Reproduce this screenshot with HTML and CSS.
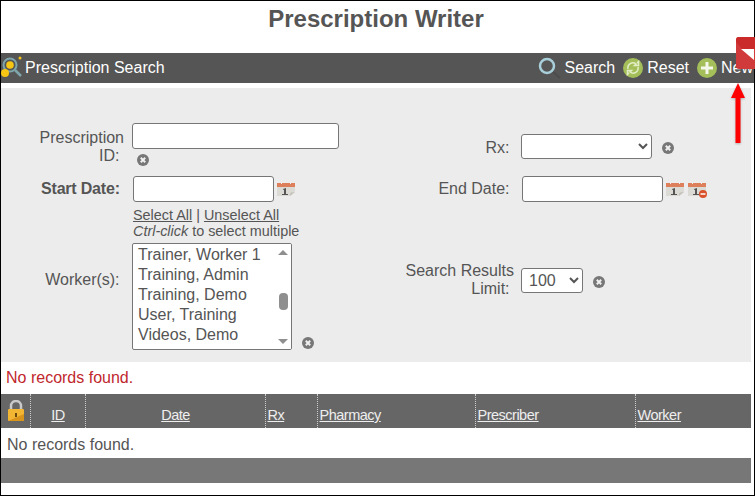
FILE: index.html
```html
<!DOCTYPE html>
<html lang="en">
<head>
  <meta charset="UTF-8" />
  <title>Prescription Writer</title>
  <link rel="stylesheet" href="styles.css">
</head>
<body>
  <svg class="icon-defs" width="0" height="0">
    <defs>
      <g id="clear">
        <circle cx="6" cy="6" r="6" fill="#777"/>
        <path d="M3.800 3.800l4.400 4.400M8.200 3.800l-4.400 4.400" stroke="#f0f0f0" stroke-width="2"/>
      </g>
      <g id="cal">
        <path d="M0 1h18v4H0z" fill="#de7f5c"/>
        <path d="M0 5h18v5l-5 4H0z" fill="#dcdad4"/>
        <path d="M13 14l5-4-4 .5-1 1z" fill="#c4c2bb"/>
        <path d="M4 0h1v2H4zM13 0h1v2h-1z" fill="#eee"/>
        <path d="M6 7l3-1v6h2v1H5v-1h2V7.500L6 8z" fill="#555"/>
      </g>
    </defs>
  </svg>

  <div class="page">
    <h1 class="title">Prescription Writer</h1>

    <div class="toolbar">
      <div class="toolbar-name">
        <svg width="24" height="24" viewBox="0 0 24 24">
          <circle cx="9" cy="9" r="6.500" fill="none" stroke="#7fa6ac" stroke-width="2"/>
          <circle cx="9" cy="9" r="3.800" fill="#f7c513"/>
          <path d="M14 14l6 6" stroke="#7fa6ac" stroke-width="2.500"/>
          <circle cx="4" cy="17" r="4" fill="#f7c513"/>
          <circle cx="19" cy="2" r="1.500" fill="#f7c513"/>
        </svg>
        <span>Prescription Search</span>
      </div>
      <div class="toolbar-actions">
        <a class="action action-search">
          <svg width="26" height="26" viewBox="0 0 26 26">
            <path d="M17 16l8 7" stroke="#4c4c4c" stroke-width="2"/>
            <circle cx="12" cy="11" r="7" fill="none" stroke="#a9d0da" stroke-width="2.500"/>
          </svg>
          Search
        </a>
        <a class="action">
          <svg width="20" height="20" viewBox="0 0 20 20">
            <circle cx="10" cy="10" r="10" fill="#a4bf5a"/>
            <path d="M5 11a5 5 0 0 1 8-5l-1.500 1.500h4v-4L14 5M15 9a5 5 0 0 1-8 5l1.500-1.500h-4v4L6 15" fill="none" stroke="#e4eec6" stroke-width="1.500"/>
          </svg>
          Reset
        </a>
        <a class="action">
          <svg width="20" height="20" viewBox="0 0 20 20">
            <circle cx="10" cy="10" r="10" fill="#a4bf5a"/>
            <path d="M10 4v12M4 10h12" stroke="#f4f7ea" stroke-width="3"/>
          </svg>
          New
        </a>
      </div>
    </div>

    <form class="search-panel">
      <label class="field-label label-id">Prescription ID:&nbsp;</label>
      <div class="field-id">
        <input class="text-input text-wide" type="text">
        <svg class="clear clear-below" width="12" height="12"><use href="#clear"/></svg>
      </div>
      <label class="field-label label-rx">Rx:&nbsp;</label>
      <div class="field-inline field-rx">
        <select class="select-rx"><option></option></select>
        <svg class="clear" width="12" height="12"><use href="#clear"/></svg>
      </div>

      <label class="field-label label-bold">Start Date:&nbsp;</label>
      <div class="field-inline">
        <input class="text-input input-start" type="text">
        <svg class="cal" width="18" height="14"><use href="#cal"/></svg>
      </div>
      <label class="field-label">End Date:&nbsp;</label>
      <div class="field-inline">
        <input class="text-input" type="text">
        <svg class="cal" width="18" height="14"><use href="#cal"/></svg>
        <svg class="cal cal-clear" width="20" height="16" viewBox="0 0 20 16">
          <use href="#cal"/>
          <circle cx="15" cy="12" r="4" fill="#d9502a"/>
          <path d="M12.500 12h5" stroke="#fff" stroke-width="1.500"/>
        </svg>
      </div>

      <label class="field-label label-workers">Worker(s):&nbsp;</label>
      <div class="field-workers">
        <div class="select-links"><a>Select All</a> | <a>Unselect All</a></div>
        <div class="select-hint"><em>Ctrl-click</em> to select multiple</div>
        <div class="listbox-row">
          <div class="listbox">
            <ul class="listbox-items">
              <li>Trainer, Worker 1</li>
              <li>Training, Admin</li>
              <li>Training, Demo</li>
              <li>User, Training</li>
              <li>Videos, Demo</li>
            </ul>
            <div class="listbox-scroll">
              <span class="arrow-up"></span>
              <span class="thumb"></span>
              <span class="arrow-down"></span>
            </div>
          </div>
          <svg class="clear" width="12" height="12"><use href="#clear"/></svg>
        </div>
      </div>
      <label class="field-label label-workers">Search Results Limit:&nbsp;</label>
      <div class="field-inline field-limit">
        <select class="select-limit"><option>100</option></select>
        <svg class="clear" width="12" height="12"><use href="#clear"/></svg>
      </div>
    </form>

    <p class="no-records">No records found.</p>

    <table class="results">
      <thead>
        <tr>
          <th class="col-lock">
            <svg width="18" height="22" viewBox="0 0 18 22">
              <path d="M4 10V6a5 5 0 0 1 10 0v4" fill="none" stroke="#c9c9c9" stroke-width="2.500"/>
              <rect x="1" y="9" width="16" height="12" rx="1" fill="#f2b632"/>
              <path d="M1 21l16-7v6a1 1 0 0 1-1 1z" fill="#d9941c"/>
              <rect x="8" y="13" width="2" height="4" fill="#6b4a10"/>
            </svg>
          </th>
          <th class="col-id center"><a>ID</a></th>
          <th class="col-date center"><a>Date</a></th>
          <th class="col-rx"><a>Rx</a></th>
          <th class="col-pharmacy"><a>Pharmacy</a></th>
          <th class="col-prescriber"><a>Prescriber</a></th>
          <th><a>Worker</a></th>
        </tr>
      </thead>
      <tbody>
        <tr><td colspan="7">No records found.</td></tr>
      </tbody>
      <tfoot>
        <tr><td colspan="7"></td></tr>
      </tfoot>
    </table>
  </div>

  <svg class="corner-flag" width="19" height="32" viewBox="0 0 19 32">
    <path d="M3 0h16v32H3a3 3 0 0 1-3-3V3a3 3 0 0 1 3-3z" fill="#d13a3a"/>
    <path d="M3 0h16v12H6L0 5V3a3 3 0 0 1 3-3z" fill="#ca2a2a"/>
    <path d="M5 12h13v11z" fill="#fff"/>
  </svg>
  <svg class="red-arrow" width="16" height="62" viewBox="0 0 16 62">
    <path d="M8 0l7 15h-4.500v45h-5V15H1z" fill="#f00"/>
  </svg>
</body>
</html>
```

FILE: styles.css
```css
* {
  box-sizing: border-box;
}
html,
body {
  height: 100%;
}
body {
  margin: 0;
  font-family: "Liberation Sans", Arial, sans-serif;
  font-size: 16px;
  color: #555;
  background: #fff;
  overflow: hidden;
}
.icon-defs {
  position: absolute;
}
.page {
  height: 496px;
  border: 1px solid #000;
}
.title {
  margin: 0;
  height: 52px;
  padding: 4px 0 0;
  width: 750px;
  text-align: center;
  font-size: 24px;
  line-height: 28px;
  font-weight: 700;
  color: #555;
}

.toolbar {
  height: 30px;
  background: #555;
  color: #fff;
  display: flex;
  justify-content: space-between;
  align-items: center;
}
.toolbar-name {
  display: flex;
  align-items: center;
}
.toolbar-actions {
  display: flex;
  align-items: center;
  gap: 8px;
  margin-right: 1px;
}
.action {
  display: flex;
  align-items: center;
  gap: 4px;
}
.action-search {
  gap: 3px;
}

.search-panel {
  width: 750px;
  height: 274px;
  margin-top: 5px;
  padding: 35px 0 12px;
  background: #ececec;
  display: grid;
  grid-template-columns: 123px 270px 120px 1fr;
  grid-template-rows: 53px 31px 1fr;
  align-items: start;
}
.field-label {
  text-align: right;
  line-height: 18px;
  padding-top: 4px;
}
.label-id {
  padding: 6px 0 0 30px;
}
.label-rx {
  padding-top: 16px;
}
.label-bold {
  font-weight: 700;
  letter-spacing: -0.200px;
}
.label-workers {
  align-self: center;
  padding-top: 3px;
}
.field-id {
  padding-left: 8px;
}
.field-inline {
  display: flex;
  align-items: center;
  padding-left: 8px;
}
.field-rx {
  padding-top: 11px;
}
.field-limit {
  align-self: center;
  padding-top: 4px;
}
.field-workers {
  padding-left: 8px;
  line-height: 16px;
  font-size: 14.400px;
}
.text-input {
  display: block;
  width: 141px;
  height: 26px;
  padding: 1px 2px;
  border: 1px solid #767676;
  border-radius: 3px;
  background: #fff;
  font: inherit;
}
.text-wide {
  width: 207px;
}
.input-start {
  margin-left: 1px;
}
select {
  height: 25px;
  margin-left: -1px;
  border: 1px solid #767676;
  border-radius: 3px;
  background: #fff;
  color: #555;
  font: inherit;
}
.select-rx {
  width: 131px;
}
.select-limit {
  width: 62px;
  padding-left: 3px;
}
.clear {
  margin: 3px 0 0 10px;
  flex: none;
}
.clear-below {
  display: block;
  margin: 5px 0 0 5px;
}
.cal {
  margin-left: 3px;
  flex: none;
}
.cal-clear {
  margin: 2px 0 0 4px;
}
.select-links {
  padding-left: 1px;
}
.select-links a {
  text-decoration: underline;
}
.select-hint {
  margin-bottom: 4px;
  padding-left: 1px;
}
.listbox-row {
  display: flex;
  align-items: flex-end;
}
.listbox-row .clear {
  margin: 0 0 1px 10px;
}
.listbox {
  width: 160px;
  height: 107px;
  border: 1px solid #767676;
  border-radius: 2px;
  background: #fff;
  display: flex;
  overflow: hidden;
}
.listbox-items {
  list-style: none;
  margin: 0;
  padding: 1px 0 0 5px;
  flex: 1;
  font-size: 16px;
  line-height: 20px;
}
.listbox-scroll {
  width: 17px;
  background: #fff;
  position: relative;
}
.arrow-up,
.arrow-down,
.thumb {
  position: absolute;
}
.arrow-up {
  top: 6px;
  left: 4px;
  border: 5px solid transparent;
  border-top: 0;
  border-bottom: 5px solid #8f8f8f;
}
.arrow-down {
  bottom: 5px;
  left: 4px;
  border: 5px solid transparent;
  border-bottom: 0;
  border-top: 5px solid #8f8f8f;
}
.thumb {
  top: 49px;
  left: 5px;
  width: 9px;
  height: 17px;
  border-radius: 4px;
  background: #8f8f8f;
}

.no-records {
  margin: 0;
  height: 32px;
  padding: 7px 0 0 5px;
  line-height: 18px;
  color: #c1272d;
}

.results {
  width: 750px;
  border-collapse: collapse;
  table-layout: fixed;
}
.results th {
  height: 34px;
  padding: 8px 0 0 2px;
  background: #666;
  color: #eee;
  font-size: 14.500px;
  font-weight: 400;
  text-align: left;
  border-left: 1px dotted #ccc;
}
.results th:first-child {
  padding: 2px 0 0 6px;
  border-left: 0;
}
.results th a {
  text-decoration: underline;
  letter-spacing: -0.500px;
}
.results th.center {
  padding-left: 1px;
  text-align: center;
}
.col-lock { width: 29px; }
.col-id { width: 55px; }
.col-date { width: 180px; }
.col-rx { width: 52px; }
.col-pharmacy { width: 158px; }
.col-prescriber { width: 160px; }
.results tbody td {
  height: 30px;
  padding: 3px 0 0 6px;
  background: #fff;
}
.results tfoot td {
  height: 25px;
  padding: 0;
  background: #777;
}

.corner-flag {
  position: absolute;
  left: 736px;
  top: 37px;
}
.red-arrow {
  position: absolute;
  left: 730px;
  top: 83px;
  filter: drop-shadow(0 1px 1px rgba(0, 0, 0, 0.25));
}
```
